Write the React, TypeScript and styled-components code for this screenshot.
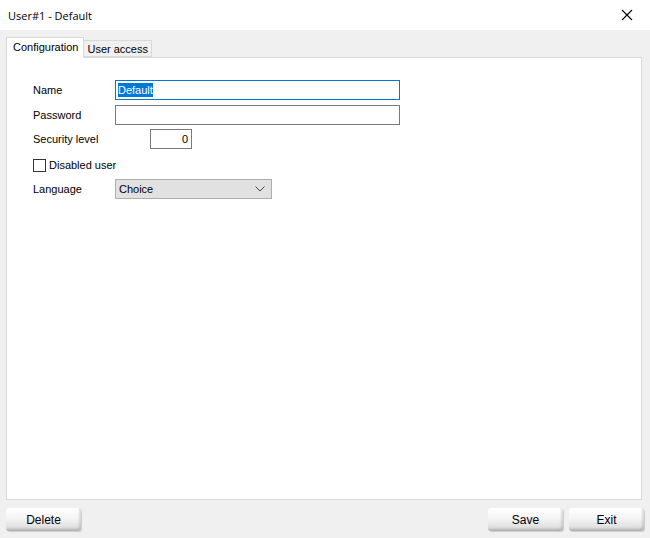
import React from 'react';
import styled, { createGlobalStyle } from 'styled-components';

const GlobalStyle = createGlobalStyle`
    html, body {
        margin: 0;
        padding: 0;
        background: #f0f0f0;
    }
    body {
        font-family: "Liberation Sans", Arial, sans-serif;
        font-size: 11px;
        color: #000;
    }
`;

const Window = styled.div`
    width: 650px;
    height: 538px;
    display: flex;
    flex-direction: column;
    background: #f0f0f0;
    overflow: hidden;
`;

const TitleBar = styled.div`
    height: 30px;
    flex: none;
    background: #fff;
    display: flex;
    align-items: center;
    justify-content: space-between;
    padding: 0 0 0 8px;
    font-family: "Open Sans", "Noto Sans", sans-serif;
    font-size: 11px;
`;

const CloseButton = styled.div`
    width: 46px;
    height: 30px;
    display: flex;
    align-items: center;
    justify-content: center;
    svg {
        display: block;
    }
`;

const Body = styled.div`
    flex: 1;
    display: flex;
    flex-direction: column;
    padding: 7px 6px 0 6px;
`;

const TabStrip = styled.div`
    display: flex;
    align-items: flex-end;
    height: 20px;
    position: relative;
    z-index: 1;
`;

const Tab = styled.div<{ $active?: boolean }>`
    height: ${p => (p.$active ? '21px' : '17px')};
    box-sizing: border-box;
    padding: ${p => (p.$active ? '3px 5px 0 6px' : '2px 3px 0 3px')};
    border: 1px solid #d9d9d9;
    border-bottom: ${p => (p.$active ? 'none' : '1px solid #d9d9d9')};
    background: ${p => (p.$active ? '#fff' : '#f0f0f0')};
    margin-left: ${p => (p.$active ? '0' : '-1px')};
    margin-bottom: ${p => (p.$active ? '-1px' : '0')};
    white-space: nowrap;
`;

const Panel = styled.div`
    height: 443px;
    box-sizing: border-box;
    margin-right: 2px;
    background: #fff;
    border: 1px solid #d9d9d9;
    padding: 22px 0 0 26px;
    display: flex;
    flex-direction: column;
`;

const Row = styled.div<{ $mt?: number }>`
    display: flex;
    align-items: center;
    margin-top: ${p => p.$mt ?? 0}px;
    height: 20px;
`;

const Label = styled.div`
    width: 82px;
    flex: none;
`;

const TextBox = styled.div<{ $width: number; $focused?: boolean; $offset?: number }>`
    width: ${p => p.$width}px;
    height: 20px;
    box-sizing: border-box;
    border: 1px solid ${p => (p.$focused ? '#0078d7' : '#7a7a7a')};
    margin-left: ${p => p.$offset ?? 0}px;
    background: #fff;
    display: flex;
    align-items: center;
    padding: 0 2px;
`;

const Selected = styled.span`
    background: #0078d7;
    color: #fff;
    line-height: 14px;
`;

const NumberValue = styled.span`
    flex: 1;
    text-align: right;
    padding-right: 1px;
`;

const CheckRow = styled.label`
    display: flex;
    align-items: center;
    gap: 3px;
    height: 20px;
    margin-top: 6px;
`;

const CheckBox = styled.span`
    width: 13px;
    height: 13px;
    box-sizing: border-box;
    border: 1px solid #333;
    background: #fff;
`;

const Select = styled.div`
    width: 157px;
    height: 20px;
    box-sizing: border-box;
    border: 1px solid #adadad;
    background: #e1e1e1;
    display: flex;
    align-items: center;
    justify-content: space-between;
    padding: 0 6px 0 3px;
`;

const Footer = styled.div`
    display: flex;
    justify-content: space-between;
    padding: 8px 0 0 0;
`;

const ButtonGroup = styled.div`
    display: flex;
    gap: 6px;
`;

const Button = styled.div`
    width: 75px;
    height: 23px;
    box-sizing: border-box;
    display: flex;
    align-items: center;
    justify-content: center;
    border-radius: 3px;
    font-size: 12px;
    background: linear-gradient(180deg, #ffffff 0%, #f4f4f4 45%, #e2e2e2 80%, #c8c8c8 100%);
    box-shadow: inset -2px -2px 2px rgba(0, 0, 0, 0.12), 1px 1px 1px rgba(0, 0, 0, 0.15);
    color: #000;
`;

export default function App() {
    return (
        <Window>
            <GlobalStyle />
            <TitleBar>
                <span>User#1 - Default</span>
                <CloseButton>
                    <svg width="12" height="12" viewBox="0 0 12 12">
                        <path d="M1 1 L11 11 M11 1 L1 11" stroke="#000" strokeWidth="1.1" />
                    </svg>
                </CloseButton>
            </TitleBar>
            <Body>
                <TabStrip>
                    <Tab $active>Configuration</Tab>
                    <Tab>User access</Tab>
                </TabStrip>
                <Panel>
                    <Row>
                        <Label>Name</Label>
                        <TextBox $width={285} $focused>
                            <Selected>Default</Selected>
                        </TextBox>
                    </Row>
                    <Row $mt={5}>
                        <Label>Password</Label>
                        <TextBox $width={285} />
                    </Row>
                    <Row $mt={4}>
                        <Label>Security level</Label>
                        <TextBox $width={42} $offset={35}>
                            <NumberValue>0</NumberValue>
                        </TextBox>
                    </Row>
                    <CheckRow>
                        <CheckBox />
                        <span>Disabled user</span>
                    </CheckRow>
                    <Row $mt={4}>
                        <Label>Language</Label>
                        <Select>
                            <span>Choice</span>
                            <svg width="10" height="6" viewBox="0 0 10 6">
                                <path d="M0.5 0.5 L5 5 L9.5 0.5" stroke="#444" fill="none" strokeWidth="1" />
                            </svg>
                        </Select>
                    </Row>
                </Panel>
                <Footer>
                    <Button>Delete</Button>
                    <ButtonGroup>
                        <Button>Save</Button>
                        <Button>Exit</Button>
                    </ButtonGroup>
                </Footer>
            </Body>
        </Window>
    );
}
